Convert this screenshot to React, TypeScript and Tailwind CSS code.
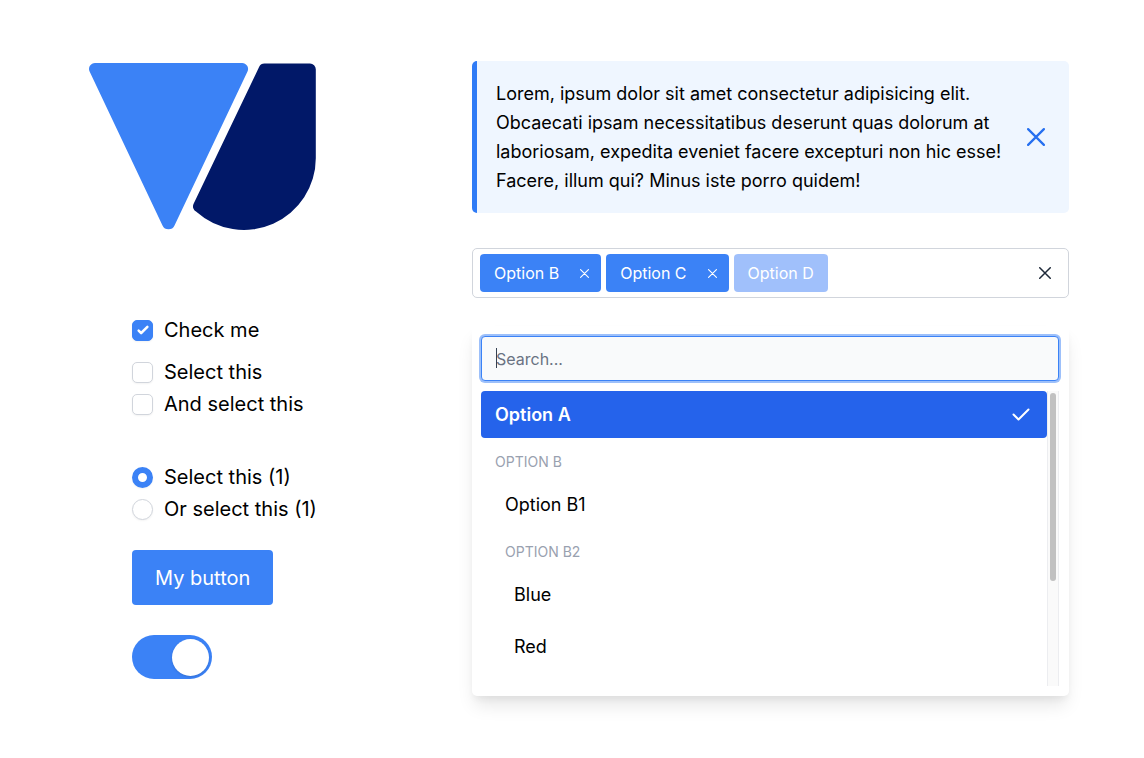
import { ReactNode, useState } from "react";

function Logo() {
  return (
    <svg width="227" height="167" viewBox="0 0 227 167" role="img" aria-label="VU logo">
      <path
        d="M6 0H153A6 6 0 0 1 158.5 8.6L85.5 162.4A6.6 6.6 0 0 1 73.5 162.4L.6 8.6A6 6 0 0 1 6 0Z"
        fill="#3b82f6"
      />
      <path
        d="M175.5 .5H221A5.8 5.8 0 0 1 226.8 6.3V95.2A71.8 71.8 0 0 1 107 148.5A5.8 5.8 0 0 1 104.5 141L170.2 3.8A5.8 5.8 0 0 1 175.5 .5Z"
        fill="#011868"
      />
    </svg>
  );
}

function Cross({ className, width }: { className: string; width: number }) {
  return (
    <svg viewBox="0 0 16 16" className={className} fill="none" stroke="currentColor" strokeWidth={width} strokeLinecap="round" aria-hidden="true">
      <path d="M1 1L15 15M15 1L1 15" />
    </svg>
  );
}

function Check({ label, defaultChecked = false }: { label: string; defaultChecked?: boolean }) {
  return (
    <label className="flex h-8 items-center gap-[11px]">
      <span className="grid place-items-center">
        <input
          type="checkbox"
          defaultChecked={defaultChecked}
          className="peer col-start-1 row-start-1 size-[21px] appearance-none rounded-[5px] border border-gray-300 bg-white shadow-xs checked:border-[#3b82f6] checked:bg-[#3b82f6]"
        />
        <svg viewBox="0 0 16 16" className="pointer-events-none invisible col-start-1 row-start-1 size-5 peer-checked:visible" fill="white" aria-hidden="true">
          <path d="M12.207 4.793a1 1 0 0 1 0 1.414l-5 5a1 1 0 0 1-1.414 0l-2-2a1 1 0 0 1 1.414-1.414L6.5 9.086l4.293-4.293a1 1 0 0 1 1.414 0z" />
        </svg>
      </span>
      {label}
    </label>
  );
}

function Radio({ label, defaultChecked = false }: { label: string; defaultChecked?: boolean }) {
  return (
    <label className="flex h-8 items-center gap-[11px]">
      <input
        type="radio"
        name="choice"
        defaultChecked={defaultChecked}
        className="size-[21px] appearance-none rounded-full border border-gray-300 bg-white shadow-xs checked:border-[6px] checked:border-[#3b82f6]"
      />
      {label}
    </label>
  );
}

function Tag({ children, onRemove }: { children: ReactNode; onRemove: string }) {
  return (
    <span className="flex h-[38px] items-center gap-[21px] rounded bg-[#3b82f6] pr-3 pl-[14px] text-white">
      {children}
      <button type="button" aria-label={onRemove}>
        <Cross className="size-[9px]" width={2} />
      </button>
    </span>
  );
}

function GroupLabel({ children, className }: { children: ReactNode; className: string }) {
  return <div className={`flex h-[38px] items-center text-sm text-gray-400 uppercase ${className}`}>{children}</div>;
}

function Option({ children, className }: { children: ReactNode; className: string }) {
  return (
    <button type="button" role="option" aria-selected="false" className={`mb-[5px] flex h-[47px] w-full items-center ${className}`}>
      {children}
    </button>
  );
}

export default function App() {
  const [on, setOn] = useState(true);
  return (
    <main className="flex min-h-screen bg-white pt-[61px] pr-[75px] pb-[62px] pl-[89px] font-['Inter','Liberation_Sans',sans-serif] text-black">
      <section className="w-[383px] shrink-0 pt-[2px]">
        <Logo />
        <div className="mt-[84px] flex flex-col items-start pl-[43px] text-[20px]">
          <Check label="Check me" defaultChecked />
          <div className="mt-[10px]">
            <Check label="Select this" />
            <Check label="And select this" />
          </div>
          <div className="mt-[41px]">
            <Radio label="Select this (1)" defaultChecked />
            <Radio label="Or select this (1)" />
          </div>
          <button type="button" className="mt-[25px] h-[55px] rounded bg-[#3b82f6] px-[23px] text-white">
            My button
          </button>
          <button
            type="button"
            role="switch"
            aria-checked={on}
            aria-label="Toggle"
            onClick={() => setOn(!on)}
            className="mt-[30px] flex h-[44px] w-[80px] items-center justify-start rounded-full bg-gray-200 px-[3px] aria-checked:justify-end aria-checked:bg-[#3b82f6]"
          >
            <span className="size-[37px] rounded-full bg-white shadow" />
          </button>
        </div>
      </section>

      <section className="min-w-0 flex-1">
        <div role="alert" className="flex items-center justify-between rounded-[5px] border-l-[5px] border-[#2f7bf6] bg-[#eff6ff] py-[18px] pr-6 pl-[19px]">
          <p className="w-[512px] text-[18px] leading-[29px]">
            Lorem, ipsum dolor sit amet consectetur adipisicing elit. Obcaecati ipsam necessitatibus deserunt quas dolorum at
            laboriosam, expedita eveniet facere excepturi non hic esse! Facere, illum qui? Minus iste porro quidem!
          </p>
          <button type="button" aria-label="Dismiss" className="text-[#256ff0]">
            <Cross className="size-[18px]" width={2} />
          </button>
        </div>

        <div className="mt-[35px] flex h-[50px] items-center gap-[5px] rounded-[5px] border border-gray-300 pr-[17px] pl-[7px] text-base">
          <Tag onRemove="Remove Option B">Option B</Tag>
          <Tag onRemove="Remove Option C">Option C</Tag>
          <span className="flex h-[38px] items-center rounded bg-[#a0c0fb] px-[14px] text-white">Option D</span>
          <button type="button" aria-label="Clear all" className="ml-auto text-gray-800">
            <Cross className="size-3" width={2} />
          </button>
        </div>

        <div className="mt-[28px] rounded-[5px] bg-white py-[10px] pr-[10px] pl-[9px] shadow-[0_12px_18px_-3px_rgba(0,0,0,0.1),0_5px_7px_-2px_rgba(0,0,0,0.05)]">
          <div className="relative">
            <input
              type="text"
              aria-label="Search"
              placeholder="Search..."
              className="block h-[45px] w-full rounded border border-[#3b82f6] bg-gray-50 px-[14px] text-base ring-2 ring-[#3b82f6]/50 outline-none placeholder:text-gray-500"
            />
            <span className="pointer-events-none absolute top-3 left-[15px] h-5 w-px bg-gray-700" />
          </div>
          <div className="mt-[10px] flex h-[295px]">
            <div role="listbox" aria-label="Options" className="min-w-0 flex-1 overflow-hidden text-[18px]">
              <button type="button" role="option" aria-selected="true" className="mb-[5px] flex h-[47px] w-full items-center justify-between rounded bg-[#2563eb] pr-[17px] pl-[14px] font-semibold text-white">
                Option A
                <svg viewBox="0 0 18 13" className="h-[13px] w-[18px]" fill="none" stroke="currentColor" strokeWidth="2" strokeLinecap="round" strokeLinejoin="round" aria-hidden="true">
                  <path d="M1.5 6.5L6.5 11.5L16.5 1.5" />
                </svg>
              </button>
              <GroupLabel className="pl-[14px]">Option B</GroupLabel>
              <Option className="pl-6">Option B1</Option>
              <GroupLabel className="pl-6">Option B2</GroupLabel>
              <Option className="pl-[33px]">Blue</Option>
              <Option className="pl-[33px]">Red</Option>
            </div>
            <div className="w-3 border-x border-gray-200/70 bg-[#fafafa] px-[2px] pt-[2px]" aria-hidden="true">
              <div className="h-[188px] rounded-full bg-[#c1c1c1]" />
            </div>
          </div>
        </div>
      </section>
    </main>
  );
}
